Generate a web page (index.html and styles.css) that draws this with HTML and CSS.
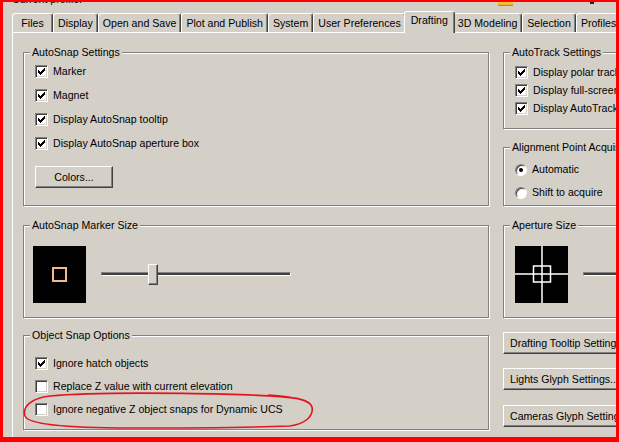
FILE: index.html
```html
<!DOCTYPE html>
<html lang="en">

<head>
  <meta charset="UTF-8" />
  <title>Options - Drafting</title>
  <link rel="stylesheet" href="styles.css">
</head>

<body>
  <div class="window">
    <div class="topbar">
      <span class="profile-label">Current profile:</span>
      <span class="profile-icon"></span>
      <span class="profile-dash"></span>
    </div>

    <div class="tabs">
      <div class="tab">Files</div>
      <div class="tab">Display</div>
      <div class="tab">Open and Save</div>
      <div class="tab">Plot and Publish</div>
      <div class="tab">System</div>
      <div class="tab">User Preferences</div>
      <div class="tab active">Drafting</div>
      <div class="tab">3D Modeling</div>
      <div class="tab">Selection</div>
      <div class="tab">Profiles</div>
    </div>

    <div class="panel">
      <div class="col-left">
        <div class="group group-autosnap">
          <div class="group-title">AutoSnap Settings</div>
          <label class="option"><span class="checkbox"><svg width="7" height="7" viewBox="0 0 7 7" shape-rendering="crispEdges"><path d="M0 2h1v3h-1z M1 3h1v3h-1z M2 4h1v3h-1z M3 3h1v3h-1z M4 2h1v3h-1z M5 1h1v3h-1z M6 0h1v3h-1z" /></svg></span>Marker</label>
          <label class="option"><span class="checkbox"><svg width="7" height="7" viewBox="0 0 7 7" shape-rendering="crispEdges"><path d="M0 2h1v3h-1z M1 3h1v3h-1z M2 4h1v3h-1z M3 3h1v3h-1z M4 2h1v3h-1z M5 1h1v3h-1z M6 0h1v3h-1z" /></svg></span>Magnet</label>
          <label class="option"><span class="checkbox"><svg width="7" height="7" viewBox="0 0 7 7" shape-rendering="crispEdges"><path d="M0 2h1v3h-1z M1 3h1v3h-1z M2 4h1v3h-1z M3 3h1v3h-1z M4 2h1v3h-1z M5 1h1v3h-1z M6 0h1v3h-1z" /></svg></span>Display AutoSnap tooltip</label>
          <label class="option"><span class="checkbox"><svg width="7" height="7" viewBox="0 0 7 7" shape-rendering="crispEdges"><path d="M0 2h1v3h-1z M1 3h1v3h-1z M2 4h1v3h-1z M3 3h1v3h-1z M4 2h1v3h-1z M5 1h1v3h-1z M6 0h1v3h-1z" /></svg></span>Display AutoSnap aperture box</label>
          <button class="btn btn-colors">Colors...</button>
        </div>

        <div class="group group-marker">
          <div class="group-title">AutoSnap Marker Size</div>
          <div class="size-row">
            <div class="preview marker-preview"><span class="marker-square"></span></div>
            <div class="slider">
              <div class="track"></div>
              <div class="thumb"></div>
            </div>
          </div>
        </div>

        <div class="group group-osnap">
          <div class="group-title">Object Snap Options</div>
          <label class="option"><span class="checkbox"><svg width="7" height="7" viewBox="0 0 7 7" shape-rendering="crispEdges"><path d="M0 2h1v3h-1z M1 3h1v3h-1z M2 4h1v3h-1z M3 3h1v3h-1z M4 2h1v3h-1z M5 1h1v3h-1z M6 0h1v3h-1z" /></svg></span>Ignore hatch objects</label>
          <label class="option"><span class="checkbox"></span>Replace Z value with current elevation</label>
          <label class="option"><span class="checkbox"></span>Ignore negative Z object snaps for Dynamic UCS</label>
        </div>
      </div>

      <div class="col-right">
        <div class="group group-autotrack">
          <div class="group-title">AutoTrack Settings</div>
          <label class="option"><span class="checkbox"><svg width="7" height="7" viewBox="0 0 7 7" shape-rendering="crispEdges"><path d="M0 2h1v3h-1z M1 3h1v3h-1z M2 4h1v3h-1z M3 3h1v3h-1z M4 2h1v3h-1z M5 1h1v3h-1z M6 0h1v3h-1z" /></svg></span>Display polar tracking vector</label>
          <label class="option"><span class="checkbox"><svg width="7" height="7" viewBox="0 0 7 7" shape-rendering="crispEdges"><path d="M0 2h1v3h-1z M1 3h1v3h-1z M2 4h1v3h-1z M3 3h1v3h-1z M4 2h1v3h-1z M5 1h1v3h-1z M6 0h1v3h-1z" /></svg></span>Display full-screen tracking vector</label>
          <label class="option"><span class="checkbox"><svg width="7" height="7" viewBox="0 0 7 7" shape-rendering="crispEdges"><path d="M0 2h1v3h-1z M1 3h1v3h-1z M2 4h1v3h-1z M3 3h1v3h-1z M4 2h1v3h-1z M5 1h1v3h-1z M6 0h1v3h-1z" /></svg></span>Display AutoTrack tooltip</label>
        </div>

        <div class="group group-align">
          <div class="group-title">Alignment Point Acquisition</div>
          <label class="option"><span class="radio on"></span>Automatic</label>
          <label class="option"><span class="radio"></span>Shift to acquire</label>
        </div>

        <div class="group group-aperture">
          <div class="group-title">Aperture Size</div>
          <div class="size-row">
            <div class="preview">
              <svg width="53" height="57" viewBox="0 0 53 57">
                <path d="M27 0V57 M0 28H53" stroke="#fff" stroke-width="1.5" />
                <rect x="18.5" y="20" width="17" height="16" fill="none" stroke="#fff" stroke-width="1.5" />
              </svg>
            </div>
            <div class="slider slider-wide">
              <div class="track"></div>
            </div>
          </div>
        </div>

        <button class="btn side-btn side-first">Drafting Tooltip Settings...</button>
        <button class="btn side-btn">Lights Glyph Settings...</button>
        <button class="btn side-btn side-last">Cameras Glyph Settings...</button>
      </div>
    </div>
  </div>

  <!-- hand drawn highlight round the last option -->
  <svg class="annotation" width="619" height="442" viewBox="0 0 619 442">
    <path d="M300 399 C270 393 100 391 50 396 C31 398 22 407 25 416 C28 424 60 428 130 428 C200 428 262 427 290 426 C304 424 314 417 312 407 C310 400 296 397 268 395" fill="none" stroke="#e3141c" stroke-width="1.6" />
  </svg>
</body>

</html>
```

FILE: styles.css
```css
* {
  box-sizing: border-box;
}

body {
  margin: 0;
  position: relative;
  font-family: "Liberation Sans", Arial, sans-serif;
  font-size: 10.6px;
  color: #000;
}

.window {
  width: 619px;
  height: 442px;
  display: flex;
  flex-direction: column;
  overflow: hidden;
  background: #d4d0c8;
  border-style: solid;
  border-color: #ff0000;
  border-width: 2px 3px 5px 3px;
}

/* clipped row above the tabs */
.topbar {
  height: 9px;
  flex-shrink: 0;
  display: flex;
  padding-left: 9px;
  overflow: hidden;
}

.profile-label {
  line-height: 13px;
  margin-top: -9px;
  white-space: nowrap;
}

.profile-icon {
  width: 15px;
  height: 12px;
  margin: -8px 0 0 auto;
  background: linear-gradient(#fbe27a, #f3b81c);
  border-bottom: 1px solid #c9850a;
}

.profile-dash {
  width: 4px;
  height: 2px;
  margin: 0 22px 0 77px;
  background: #222;
}

/* tabs */
.tabs {
  height: 21px;
  flex-shrink: 0;
  display: flex;
  align-items: flex-end;
  margin-left: 9px;
}

.tab {
  height: 19px;
  min-width: 41px;
  padding: 0 4px;
  flex-shrink: 0;
  border: 1px solid #fff;
  border-bottom: none;
  border-right-color: #404040;
  border-radius: 3px 3px 0 0;
  box-shadow: inset -1px 0 #808080;
  line-height: 18px;
  text-align: center;
  white-space: nowrap;
}

.tab.active {
  height: 22px;
  margin: 0 -2px -1px;
  padding: 0 6px;
  position: relative;
  z-index: 1;
  background: #d4d0c8;
  line-height: 16px;
}

/* page body */
.panel {
  flex: 1;
  display: flex;
  gap: 14px;
  margin-left: 9px;
  padding: 19px 0 0 10px;
  border-top: 1px solid #fff;
  border-left: 1px solid #fff;
}

.col-left {
  width: 466px;
  flex-shrink: 0;
}

.col-right {
  width: 200px;
  flex-shrink: 0;
}

.group {
  border: 1px solid #808080;
  box-shadow: inset 1px 1px #fff, 1px 1px #fff;
  padding-left: 11px;
}

.group-title {
  width: fit-content;
  margin: -7px 0 0 -5px;
  padding: 0 2px;
  background: #d4d0c8;
  line-height: 13px;
  white-space: nowrap;
}

.option {
  height: 13px;
  display: flex;
  align-items: center;
  gap: 5px;
  margin-top: 11px;
  line-height: 13px;
  white-space: nowrap;
}

.checkbox {
  width: 13px;
  height: 13px;
  flex-shrink: 0;
  display: flex;
  align-items: center;
  justify-content: center;
  background: #fff;
  border: 1px solid;
  border-color: #808080 #fff #fff #808080;
  box-shadow: inset 1px 1px #404040, inset -1px -1px #d4d0c8;
}

.radio {
  width: 12px;
  height: 12px;
  flex-shrink: 0;
  position: relative;
  border-radius: 50%;
  background: #fff;
  border: 1px solid;
  border-color: #808080 #fff #fff #808080;
  box-shadow: inset 1px 1px #404040;
}

.radio.on::after {
  content: "";
  position: absolute;
  left: 3px;
  top: 3px;
  width: 4px;
  height: 4px;
  border-radius: 50%;
  background: #000;
}

.btn {
  height: 22px;
  display: flex;
  align-items: center;
  justify-content: center;
  padding: 0;
  font: inherit;
  color: #000;
  background: #d4d0c8;
  border: 1px solid;
  border-color: #fff #404040 #404040 #fff;
  box-shadow: inset -1px -1px #808080;
  white-space: nowrap;
}

/* left column */
.group-autosnap {
  padding-bottom: 17px;
}

.group-autosnap .option:first-of-type {
  margin-top: 6px;
}

.btn-colors {
  width: 78px;
  margin-top: 16px;
}

.group-marker {
  margin-top: 19px;
  padding-bottom: 14px;
}

.group-marker .preview {
  margin-left: -2px;
}

.size-row {
  display: flex;
  align-items: center;
  margin-top: 14px;
}

.preview {
  width: 53px;
  height: 57px;
  flex-shrink: 0;
  background: #000;
}

.preview svg {
  display: block;
}

.marker-preview {
  display: flex;
  align-items: center;
  justify-content: center;
}

.marker-square {
  width: 15px;
  height: 15px;
  border: 2px solid #f6b887;
}

.slider {
  position: relative;
  width: 190px;
  height: 21px;
  margin-left: 15px;
}

.slider-wide {
  width: 140px;
}

.track {
  height: 4px;
  margin-top: 8px;
  background: #404040;
  border: 1px solid;
  border-color: #808080 #fff #fff #808080;
}

.thumb {
  position: absolute;
  left: 47px;
  top: 0;
  width: 10px;
  height: 21px;
  background: #d4d0c8;
  border: 1px solid;
  border-color: #fff #404040 #404040 #fff;
  box-shadow: inset -1px -1px #808080;
}

.group-osnap {
  margin-top: 17px;
  padding-bottom: 13px;
}

.group-osnap .option {
  margin-top: 10px;
}

.group-osnap .option:first-of-type {
  margin-top: 15px;
}

/* right column */
.group-autotrack {
  padding-bottom: 13px;
}

.group-autotrack .option {
  margin-top: 5px;
}

.group-autotrack .option:first-of-type {
  margin-top: 7px;
}

.group-align {
  margin-top: 18px;
  padding-bottom: 6px;
}

.group-align .option {
  margin-top: 10px;
}

.group-align .option:first-of-type {
  margin-top: 9px;
}

.group-aperture {
  margin-top: 19px;
  padding-bottom: 14px;
}

.side-btn {
  width: 150px;
  justify-content: flex-start;
  padding-left: 6px;
  margin-top: 14px;
}

.side-last {
  margin-top: 15px;
}

.annotation {
  position: absolute;
  left: 0;
  top: 0;
  pointer-events: none;
}
```
